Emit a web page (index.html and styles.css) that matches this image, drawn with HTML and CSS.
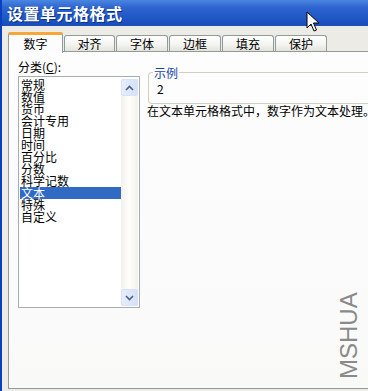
FILE: index.html
```
<!DOCTYPE html>
<html lang="zh-CN">
<head>
    <meta charset="UTF-8">
    <title>设置单元格格式</title>
    <link rel="stylesheet" href="styles.css">
</head>
<body>
<div class="dialog">
    <div class="caption">设置单元格格式</div>
    <div class="client">
        <ul class="tabs">
            <li class="current">数字</li>
            <li>对齐</li>
            <li>字体</li>
            <li>边框</li>
            <li>填充</li>
            <li>保护</li>
        </ul>
        <div class="page">
            <div class="left">
                <div class="label">分类(<u>C</u>):</div>
                <div class="listbox">
                    <ul class="items">
                        <li>常规</li>
                        <li>数值</li>
                        <li>货币</li>
                        <li>会计专用</li>
                        <li>日期</li>
                        <li>时间</li>
                        <li>百分比</li>
                        <li>分数</li>
                        <li>科学记数</li>
                        <li class="sel">文本</li>
                        <li>特殊</li>
                        <li>自定义</li>
                    </ul>
                    <div class="vscroll">
                        <span class="sbtn"><svg width="9" height="6" viewBox="0 0 9 6"><path d="M1 5 L4.5 1.5 L8 5" fill="none" stroke="#4d6185" stroke-width="1.6"/></svg></span>
                        <span class="track"></span>
                        <span class="sbtn"><svg width="9" height="6" viewBox="0 0 9 6"><path d="M1 1 L4.5 4.5 L8 1" fill="none" stroke="#4d6185" stroke-width="1.6"/></svg></span>
                    </div>
                </div>
            </div>
            <div class="right">
                <fieldset class="sample">
                    <legend>示例</legend>
                    <div class="value">2</div>
                </fieldset>
                <p class="desc">在文本单元格格式中，数字作为文本处理。</p>
            </div>
        </div>
    </div>
    <div class="mark">MSHUA</div>
    <svg class="cursor" width="14" height="22" viewBox="0 0 14 22">
        <path d="M1 1 L1 17 L5 13 L8 20 L10.5 19 L7.5 12 L13 12 Z" fill="#fff" stroke="#000" stroke-width="1"/>
    </svg>
</div>
</body>
</html>
```

FILE: styles.css
```
* {
    padding: 0;
    margin: 0;
    list-style: none;
    box-sizing: border-box;
}

body {
    font-family: "Noto Sans CJK SC", "Liberation Sans", sans-serif;
    font-size: 12px;
    background: #ece9d8;
}

.dialog {
    width: 368px;
    height: 391px;
    position: relative;
    overflow: hidden;
    border-left: 2px solid #0a3fbf;
    background: #ecebe6;
    display: flex;
    flex-direction: column;
}

.caption {
    height: 26px;
    padding: 3px 0 0 5px;
    color: #fff;
    font-size: 16px;
    font-weight: bold;
    line-height: 20px;
    letter-spacing: 0.5px;
    background: linear-gradient(#4a86e0, #2d64cf 30%, #1d55c4 75%, #1a4db8);
    text-shadow: 1px 1px 0 #0b2f86;
}

.client {
    flex: 1;
    padding: 5px 0 2px 6px;
    display: flex;
    flex-direction: column;
}

.tabs {
    display: flex;
    align-items: flex-end;
    height: 21px;
    position: relative;
    z-index: 1;
}

.tabs li {
    width: 52px;
    height: 16px;
    margin-left: 1px;
    margin-bottom: 1px;
    text-align: center;
    line-height: 15px;
    color: #000;
    border: 1px solid #919b9c;
    border-bottom: 0;
    border-radius: 3px 3px 0 0;
    background: linear-gradient(#ffffff, #f3f3ef 60%, #e3e3dc);
}

.tabs li:nth-child(2) {
    width: 51px;
}

.tabs li.current {
    width: 55px;
    height: 21px;
    margin-left: 0;
    margin-bottom: -1px;
    line-height: 17px;
    background: #fcfcfe;
    border-top: 3px solid #f7a73a;
    border-radius: 2px 2px 0 0;
}

.page {
    flex: 1;
    border: 1px solid #919b9c;
    border-right: 0;
    margin-top: -1px;
    background: linear-gradient(#fdfdfe, #f9f9f8);
    display: flex;
    gap: 8px;
    padding: 8px 0 0 9px;
}

.label {
    height: 16px;
    line-height: 14px;
}

.listbox {
    width: 122px;
    height: 232px;
    border: 1px solid #a5acb5;
    background: #fff;
    display: flex;
    padding: 2px 1px 1px 1px;
}

.items {
    flex: 1;
    line-height: 12px;
}

.items li {
    height: 12px;
    padding-left: 1px;
    white-space: nowrap;
}

.items li.sel {
    background: #316ac5;
    color: #fff;
}

.vscroll {
    width: 17px;
    display: flex;
    flex-direction: column;
    background: linear-gradient(90deg, #f3f1ec, #fefefb 50%, #f3f1ec);
}

.sbtn {
    height: 17px;
    display: flex;
    align-items: center;
    justify-content: center;
    border: 1px solid #d8e2f6;
    border-radius: 2px;
    background: linear-gradient(90deg, #e6eefc, #d5e1fa);
}

.track {
    flex: 1;
}

.right {
    flex: 1;
    padding-top: 9px;
}

.sample {
    height: 38px;
    margin-top: -3px;
    border: 1px solid #d0d0bf;
    border-right: 0;
    border-radius: 4px 0 0 4px;
    padding: 0 0 0 8px;
}

.sample legend {
    color: #1645a8;
    padding: 0 1px;
    margin-left: -4px;
    line-height: 13px;
}

.value {
    line-height: 14px;
    padding-top: 3px;
}

.desc {
    margin-left: -1px;
    white-space: nowrap;
    line-height: 14px;
}

.mark {
    position: absolute;
    left: 302px;
    top: 322px;
    width: 90px;
    transform: rotate(-90deg);
    font-family: "Liberation Sans", sans-serif;
    font-size: 24px;
    line-height: 24px;
    color: #8a8a8a;
    letter-spacing: 0;
}

.cursor {
    position: absolute;
    left: 304px;
    top: 11px;
}
```
